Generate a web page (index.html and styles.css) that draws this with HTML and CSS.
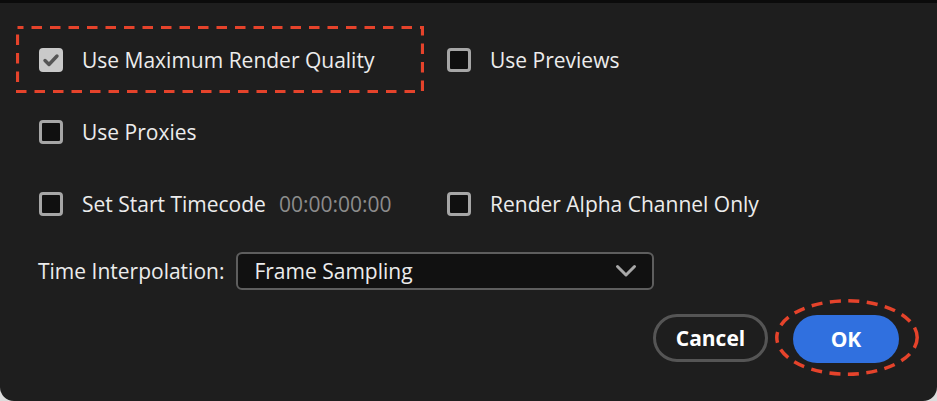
FILE: index.html
```html
<!DOCTYPE html>
<html lang="en">
<head>
  <meta charset="UTF-8" />
  <title>Render Settings</title>
  <link rel="stylesheet" href="styles.css">
</head>
<body>
  <div class="topbar"></div>
  <div class="dialog">
    <div class="options">
      <div class="opt highlight">
        <svg class="mark" width="408" height="67" viewBox="0 0 408 67"><rect x="1.5" y="1.5" width="405" height="64" fill="none" stroke="#e5432b" stroke-width="3.2" stroke-dasharray="10.5 8" stroke-dashoffset="4.5"/></svg>
        <span class="box checked">
          <svg width="24" height="24" viewBox="0 0 24 24"><polyline points="6,12.5 10,16.5 18,8" fill="none" stroke="#555" stroke-width="3.4" stroke-linecap="round" stroke-linejoin="round"/></svg>
        </span>
        <span class="label">Use Maximum Render Quality</span>
      </div>
      <div class="opt">
        <span class="box"></span>
        <span class="label">Use Previews</span>
      </div>
      <div class="opt">
        <span class="box"></span>
        <span class="label">Use Proxies</span>
      </div>
      <div class="opt"></div>
      <div class="opt">
        <span class="box"></span>
        <span class="label">Set Start Timecode</span>
        <span class="timecode">00:00:00:00</span>
      </div>
      <div class="opt">
        <span class="box"></span>
        <span class="label">Render Alpha Channel Only</span>
      </div>
    </div>

    <div class="interp">
      <span class="label">Time Interpolation:</span>
      <div class="select">
        <span>Frame Sampling</span>
        <svg width="22" height="14" viewBox="0 0 22 14"><polyline points="2.5,2.5 11,11 19.5,2.5" fill="none" stroke="#a8a8a8" stroke-width="3" stroke-linecap="round" stroke-linejoin="round"/></svg>
      </div>
    </div>

    <div class="actions">
      <button class="btn cancel">Cancel</button>
      <div class="ring">
        <svg class="mark" width="144" height="77" viewBox="0 0 144 77"><ellipse cx="72" cy="38.5" rx="70.2" ry="36.7" fill="none" stroke="#e5432b" stroke-width="3.5" stroke-dasharray="11 7.5"/></svg>
        <button class="btn ok">OK</button>
      </div>
    </div>
  </div>
</body>
</html>
```

FILE: styles.css
```css
html, body { margin: 0; padding: 0; }
body {
  width: 937px; height: 401px; overflow: hidden;
  background: #dcdcdc;
  font-family: "Open Sans", "Noto Sans", sans-serif;
  color: #ececec;
}
.topbar { height: 3px; background: #0b0b0b; }
.dialog {
  height: 398px; box-sizing: border-box;
  background: #1e1e1e;
  border-radius: 0 0 14px 14px;
  padding: 23px 18px 0 16px;
}

.options {
  display: grid;
  grid-template-columns: 408px 1fr;
  grid-auto-rows: 67px;
  column-gap: 23px;
  row-gap: 5px;
}
.opt { display: flex; align-items: center; padding-left: 23px; }
.opt:nth-child(even) { padding-left: 0; }
.highlight { position: relative; }
.mark { position: absolute; left: 0; top: 0; pointer-events: none; }

.box {
  width: 24px; height: 24px; box-sizing: border-box;
  border: 3px solid #a6a6a6; border-radius: 4px;
  background: #101010;
  margin-right: 19px; flex-shrink: 0;
}
.box.checked { background: #c9c9c9; border-color: #c9c9c9; }
.box.checked svg { display: block; margin: -3px; }

.label { font-size: 21px; font-weight: 500; }
.timecode { font-size: 21px; color: #8c8c8c; margin-left: 13px; }

.interp {
  display: flex; align-items: center;
  margin-top: 15px; padding-left: 22px;
}
.select {
  margin-left: 12px;
  width: 418px; height: 38px; box-sizing: border-box;
  border: 2px solid #5e5e5e; border-radius: 6px;
  background: #111;
  display: flex; align-items: center; justify-content: space-between;
  padding: 0 15px 0 16px;
  font-size: 21px; font-weight: 500;
}
.select svg { display: block; }

.actions {
  display: flex; align-items: center; justify-content: flex-end;
  margin-top: 9px;
}
.btn {
  font-family: "Open Sans", "Noto Sans", sans-serif;
  font-size: 21px; font-weight: 700; color: #fff;
  height: 48px; border-radius: 24px; box-sizing: border-box;
  cursor: pointer;
}
.cancel {
  width: 115px; background: #1e1e1e;
  border: 3px solid #555;
}
.ring {
  position: relative;
  margin-left: 7px;
  width: 144px; height: 77px;
  display: flex; align-items: center; justify-content: center;
}
.ok {
  width: 106px; background: #3070df; border: none;
  margin-left: -2px; margin-top: 3px;
}
```
